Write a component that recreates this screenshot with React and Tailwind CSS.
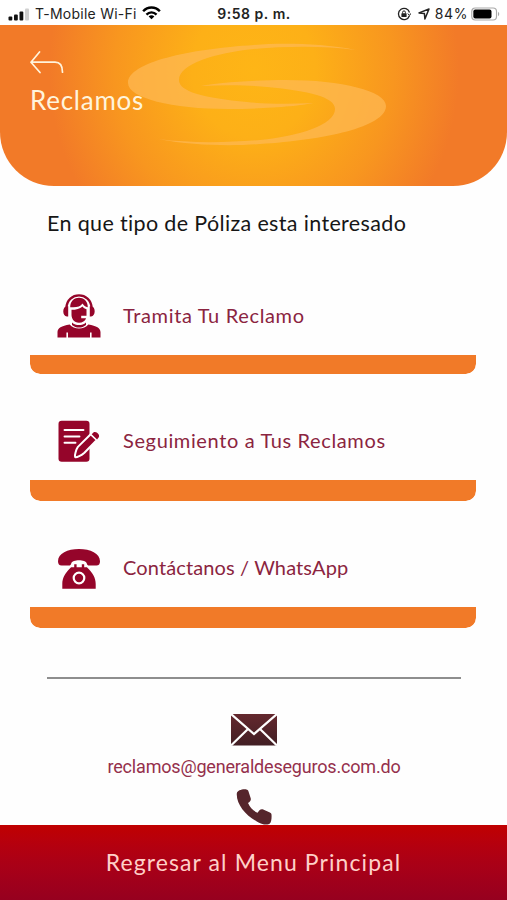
function StatusBar() {
  return (
    <div className="h-[25px] pl-2 pr-[7px] grid grid-cols-[1fr_auto_1fr] items-center bg-white text-[#222] font-['Inter',sans-serif] text-[14px] leading-none pt-[3px]">
      <div className="flex items-center">
        <svg viewBox="0 0 22 13" className="w-[22px] h-[13px] mr-[5px]">
          <rect x="0.5" y="8.5" width="3.8" height="4" rx="1" fill="#111" />
          <rect x="6" y="6.5" width="3.8" height="6" rx="1" fill="#111" />
          <rect x="11.5" y="3.5" width="3.8" height="9" rx="1" fill="#111" />
          <rect x="17" y="0.5" width="4" height="12" rx="1" fill="#d0d0d0" />
        </svg>
        <span className="whitespace-nowrap tracking-[0.25px]">T-Mobile Wi-Fi</span>
        <svg viewBox="0 0 20 14" className="w-[19px] h-[14px] ml-[5px] mb-[3px]" fill="none" stroke="#000" strokeWidth="2.5">
          <path d="M1.2 5.2C6-.1 14-.1 18.8 5.2" />
          <path d="M4.7 8.7c3-3.1 7.6-3.1 10.6 0" />
          <path d="M10 13.6 7 10.6c1.7-1.6 4.3-1.6 6 0z" fill="#000" stroke="none" />
        </svg>
      </div>
      <span className="font-semibold text-[14px] tracking-[0.55px]">9:58 p. m.</span>
      <div className="flex items-center justify-end">
        <svg viewBox="0 0 14 14" className="w-[14px] h-[14px] mr-[7px]" fill="none" stroke="#222" strokeWidth="1.3">
          <path d="M12.4 8.7A5.6 5.6 0 1 1 12.5 5.5" />
          <path d="m10.7 6.7 2 1.7 1.2-2.1" strokeWidth="1" />
          <rect x="4.4" y="6.2" width="5.2" height="3.9" rx=".6" fill="#222" stroke="none" />
          <path d="M5.6 6.5V5.3a1.4 1.4 0 0 1 2.8 0v1.2" strokeWidth="1" />
        </svg>
        <svg viewBox="0 0 12 12" className="w-[12px] h-[12px] mr-[5px] mb-px" fill="none" stroke="#222" strokeWidth="1.5" strokeLinejoin="round">
          <path d="M1 4.9 11 1 6.9 11 6.4 5.6z" />
        </svg>
        <span className="tracking-[0.6px]">84%</span>
        <svg viewBox="0 0 30 14" className="w-[29px] h-[14px] ml-[3px] mb-px">
          <rect x="0.8" y="0.8" width="25.6" height="12.4" rx="3.6" fill="#fff" stroke="#aaa" strokeWidth="1.2" />
          <rect x="2.4" y="2.4" width="18.8" height="9.2" rx="2" fill="#000" />
          <path d="M27.9 4.7c1.8.7 1.8 3.9 0 4.6z" fill="#aaa" />
        </svg>
      </div>
    </div>
  );
}

function Swirl() {
  const arm =
    "M356 50C320 43 280 43 254 45C190 49 128 62 128 83C128 98 172 109 228 109C265 109 300 106 313 103C290 104 265 104 247 102C205 98 179 92 179 80C179 64 215 53 254 49C290 46 325 46 356 50Z";
  return (
    <svg viewBox="0 25 507 161" className="absolute inset-0 w-full h-full" fill="#fdb954" fillOpacity="0.72">
      <path d={arm} />
      <path d={arm} transform="rotate(180 257 94.5)" />
    </svg>
  );
}

function AgentIcon() {
  return (
    <svg viewBox="0 0 44 44" className="w-11 h-11" fill="#95052a">
      <path d="M9.4 14C10-2.8 34-2.8 34.6 14" fill="none" stroke="#95052a" strokeWidth="2.4" />
      <path d="M11.2 12.2v10.2H9.9c-4.8 0-4.8-10.2 0-10.2zM32.8 12.2v10.2h1.3c4.8 0 4.8-10.2 0-10.2z" />
      <path d="M13.2 13.2C13.2.7 30.8.7 30.8 13.2c-2.4-.4-4.2-1.8-5.3-3.7-2.1 3.2-6.3 4.3-12.3 3.7z" />
      <path d="M14.5 15.8c4.6-.1 8.4-1.2 11-3.4 1 1.3 2.3 2.2 4 2.8v6.6h-5.3v2.4h4.9c-1 2.8-3.7 4.6-7.1 4.6-5 0-7.5-4.2-7.5-8z" />
      <path d="M15 28.4c3.8 3.6 10.2 3.6 14 0v2.5c-3.8 3.4-10.2 3.4-14 0z" />
      <path d="M.5 43.5v-5.2c0-4.5 4-6.3 12.2-7.8 4.1 5.3 14.5 5.3 18.6 0 8.2 1.5 12.2 3.3 12.2 7.8v5.2H34.6v-5h-1.6v5H11v-5H9.4v5z" />
    </svg>
  );
}

function FormIcon() {
  return (
    <svg viewBox="0 0 44 44" className="w-11 h-11" fill="#95052a">
      <rect x="1.5" y="1.8" width="31" height="41" rx="3.2" />
      <path d="M7.5 11h19M7.5 17.5h15M7.5 23.8h11" stroke="#fff" strokeWidth="1.9" strokeLinecap="round" />
      <path d="M18.3 38.2c-1-.8.6-7.6 2.6-10.3l12.8-12.7 6.2 5.8L27.4 33.8c-2.8 2.6-8 5-9.1 4.4z" stroke="#fff" strokeWidth="2" strokeLinejoin="round" />
      <path d="m34.7 15.3 2-2c2.4-1.8 6.8 2.6 5 5l-1.6 2.1z" />
    </svg>
  );
}

function TelephoneIcon() {
  return (
    <svg viewBox="0 0 44 44" className="w-11 h-11" fill="#95052a">
      <path d="M14.2 17.5c1-4.4 14.6-4.4 15.6 0 .4 1.5 1 2.1 2.4 2.1h7.2c2.5 0 3.6-1.6 3.6-4.3C43 7.5 33.4 3 22 3S1 7.5 1 15.3c0 2.7 1.2 4.3 3.6 4.3h7.2c1.4 0 2-.6 2.4-2.1z" />
      <path d="M17.2 18.2v3.1h-3.1C8.5 26.5 5.3 31.8 5.3 38v4.8h33.4V38c0-6.2-3.2-11.5-8.8-16.7h-2.7v-3.1h-2.4v3.1h-5.2v-3.1z" />
      <circle cx="22" cy="32" r="5.3" fill="none" stroke="#fff" strokeWidth="2.2" />
    </svg>
  );
}

function OptionCard({ icon, label, className, barClass }) {
  return (
    <button className={`w-[446px] flex flex-col text-left rounded-b-[10px] overflow-hidden bg-[#fefefe] ${className}`}>
      <span className="flex-1 flex items-center pl-[27px] gap-[22px]">
        {icon}
        {label}
      </span>
      <span className={`w-full rounded-b-[10px] bg-[#f17a28] ${barClass}`} />
    </button>
  );
}

export default function App() {
  return (
    <div className="w-full h-[900px] flex flex-col overflow-hidden bg-[#fefefe] font-['Lato',sans-serif]">
      <StatusBar />

      <header className="relative h-[161px] shrink-0 overflow-hidden rounded-b-[54px] bg-[radial-gradient(ellipse_205px_225px_at_254px_45px,#feb516_0%,#fdb017_30%,#f8961f_68%,#f27a28_100%)]">
        <Swirl />
        <div className="relative pl-[30px] pt-[26px] text-[#fff4dc]">
          <svg viewBox="0 0 34 24" className="block w-[34px] h-6" fill="none" stroke="currentColor" strokeWidth="1.7" strokeLinecap="round" strokeLinejoin="round">
            <path d="M9.5 1 1 11.2l9 10.3M1 11.2h24c5 0 7.5 3 7.5 10" />
          </svg>
          <h1 className="mt-[9px] text-[26px] leading-[32px]"><span className="tracking-[0.75px]">Reclamos</span></h1>
        </div>
      </header>

      <main className="flex-1 min-h-0 px-[30px] flex flex-col overflow-hidden">
        <h2 className="mt-[23px] pl-[17px] text-[21.5px] leading-7 text-[#161616] whitespace-nowrap">
          <span className="tracking-[0.35px]">En que tipo de Póliza esta interesado</span>
        </h2>

        <OptionCard
          className="mt-[39px] h-[98px] shrink-0"
          barClass="h-[19px]"
          icon={<AgentIcon />}
          label={<span className="mb-0.5 text-[20px] text-[#8b2440] tracking-[0.65px]">Tramita Tu Reclamo</span>}
        />
        <OptionCard
          className="mt-[28px] h-[99px] shrink-0"
          barClass="h-[21px]"
          icon={<FormIcon />}
          label={<span className="mb-0.5 text-[20px] text-[#8b2440] tracking-[0.63px]">Seguimiento a Tus Reclamos</span>}
        />
        <OptionCard
          className="mt-[28px] h-[99px] shrink-0"
          barClass="h-[21px]"
          icon={<TelephoneIcon />}
          label={<span className="mb-0.5 text-[20px] text-[#8b2440] tracking-[0.12px]">Contáctanos / WhatsApp</span>}
        />

        <hr className="mt-[49px] ml-[17px] mr-4 border-0 h-[1.5px] shrink-0 bg-[#8e8e8e]" />

        <div className="mt-[35px] flex flex-col items-center pl-px">
          <svg viewBox="0 0 46 32" className="w-[46px] h-8 shrink-0">
            <defs>
              <linearGradient id="mail" x1="0" y1="0" x2="0" y2="1">
                <stop offset="0" stopColor="#64282e" />
                <stop offset="1" stopColor="#421f24" />
              </linearGradient>
            </defs>
            <rect width="46" height="31.5" fill="url(#mail)" />
            <path d="m0 0 23 20L46 0M0 31.5 17 15M46 31.5 29 15" fill="none" stroke="#fff" strokeWidth="2.2" />
          </svg>
          <a href="mailto:reclamos@generaldeseguros.com.do" className="mt-[9px] text-[18px] leading-6 font-['Roboto',sans-serif] text-[#95304c]">
            <span className="tracking-[-0.19px]">reclamos@generaldeseguros.com.do</span>
          </a>
          <svg viewBox="0 0 36 36" className="w-9 h-9 mt-[10px] shrink-0" fill="#55252b">
            <path d="M.8 4.5C1 1.2 8-.5 11 .8c1 .4 1.3 1 1.6 1.9l2.1 6.5c.6 2-.6 3.4-2.7 4.8 2 4.4 5.2 7.8 9.6 9.8 1.4-2.7 3.1-4.3 5.6-3.4l6.7 3c1 .5 1.5 1 1.6 2.2.3 3-.2 7.6-1.7 8.9-2.5 2.2-8.8.6-13-2.1C9.2 26.5.1 14.8.8 4.5z" />
          </svg>
        </div>
      </main>

      <button className="h-[75px] shrink-0 pb-px bg-linear-to-b from-[#c00000] to-[#96001f] text-[#ffd0c8] text-[23px] font-['Lato',sans-serif]">
        <span className="tracking-[1.1px]">Regresar al Menu Principal</span>
      </button>
    </div>
  );
}
